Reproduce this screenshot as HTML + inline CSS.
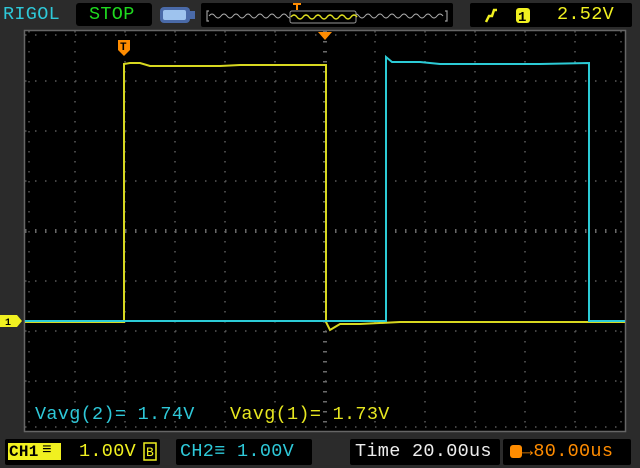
<!DOCTYPE html>
<html><head><meta charset="utf-8"><style>
*{margin:0;padding:0}
body{width:640px;height:468px;background:#2b2b2b;overflow:hidden;position:relative;font-family:"Liberation Mono",monospace}
.t{position:absolute;font-size:18.5px;line-height:20px;white-space:pre;letter-spacing:0.3px}
.box{position:absolute;background:#000;border-radius:3px}
</style></head><body>
<div class="t" style="left:3px;top:5px;color:#2ec8d8">RIGOL</div>
<div class="box" style="left:76px;top:3px;width:76px;height:23px"></div>
<div class="t" style="left:89px;top:5px;color:#1fd91f">STOP</div>
<svg style="position:absolute;left:0;top:0" width="640" height="468">
<rect x="160" y="7" width="30" height="16" rx="4" fill="#4a6aa8"/>
<rect x="163" y="10" width="23" height="10" rx="2" fill="#9ec3ee"/>
<rect x="190" y="11" width="5" height="8" fill="#4a6aa8"/>
<rect x="201" y="3" width="252" height="24" rx="2" fill="#000"/>
<path d="M209 11 h-2 v10 h2 M445 11 h2 v10 h-2" stroke="#999" fill="none" stroke-width="1.2"/>
<path d="M209 16 q3 -4 6 0 t6 0 t6 0 t6 0 t6 0 t6 0 t6 0 t6 0 t6 0 t6 0 t6 0 t6 0 t6 0 t6 0 t6 0 t6 0 t6 0 t6 0 t6 0 t6 0 t6 0 t6 0 t6 0 t6 0 t6 0 t6 0 t6 0 t6 0 t6 0 t6 0 t6 0 t6 0 t6 0 t6 0 t6 0 t6 0 t6 0 t6 0 t6 0" stroke="#aaa" fill="none" stroke-width="1"/>
<rect x="290" y="11" width="66" height="12" rx="2" fill="#000" stroke="#999"/>
<path d="M291 17 q3 -4 6 0 t6 0 t6 0 t6 0 t6 0 t6 0 t6 0 t6 0 t6 0 t6 0 t6 0" stroke="#e0e020" fill="none" stroke-width="1.4"/>
<path d="M293 4 h8 M297 4 v6" stroke="#ff8c00" stroke-width="2"/>
<rect x="470" y="3" width="162" height="24" rx="2" fill="#000"/>
<rect x="516" y="8" width="14" height="15" rx="3" fill="#f0f020"/>
<text x="518" y="21" font-family="Liberation Mono" font-size="14" font-weight="bold" fill="#000">1</text>
<path d="M486 22 l3 -6 h3 l2 -6 h3" stroke="#f0f020" stroke-width="2.5" fill="none"/>
<rect x="24.5" y="30.5" width="601" height="401" fill="#000" stroke="#666" stroke-width="1.5"/>
<g stroke="#5a5a5a" stroke-width="1.5" stroke-dasharray="1.5 8.5">
<path d="M75 31V431M125 31V431M175 31V431M225 31V431M275 31V431M375 31V431M425 31V431M475 31V431M525 31V431M575 31V431"/>
<path d="M25 81H625M25 131H625M25 181H625M25 281H625M25 331H625M25 381H625"/>
</g>
<g stroke="#6a6a6a" stroke-dasharray="1.5 8.5">
<path d="M325 31V431" stroke-width="4"/>
<path d="M25 231H625" stroke-width="4"/>
<path d="M25 35H625M25 427H625M29 31V431M621 31V431" stroke-width="1.2"/>
</g>
<path d="M25 322H124V64L130 63H140L150 66H220L240 65H326V322L330 330L340 324H360L400 322H625" stroke="#d8d820" stroke-width="2" fill="none"/>
<path d="M25 321H386V57L392 62H420L440 64H540L589 63V321H625" stroke="#2ccbd6" stroke-width="2" fill="none"/>
<path d="M118 40h12v10l-6 6l-6-6z" fill="#ff8c00"/>
<text x="120" y="50" font-family="Liberation Mono" font-size="11" font-weight="bold" fill="#000">T</text>
<path d="M318 32h14l-7 8z" fill="#ff8c00"/>
<path d="M0 315h17l5 6l-5 6h-17z" fill="#f0f020"/>
<text x="5" y="325" font-family="Liberation Mono" font-size="10" font-weight="bold" fill="#000">1</text>
<rect x="5" y="439" width="155" height="26" rx="2" fill="#000"/>
<rect x="176" y="439" width="136" height="26" rx="2" fill="#000"/>
<rect x="350" y="439" width="150" height="26" rx="2" fill="#000"/>
<rect x="503" y="439" width="128" height="26" rx="2" fill="#000"/>
<rect x="8" y="443" width="53" height="17" fill="#f0f020"/>
<rect x="144" y="443" width="12" height="17" fill="#000" stroke="#f0f020" stroke-width="1.5"/>
<rect x="510" y="445" width="12" height="13" rx="3" fill="#ff8c00"/>
</svg>
<div class="t" style="left:9px;top:442px;color:#000;font-weight:bold;font-size:16px">CH1</div>
<div class="t" style="left:42px;top:440px;color:#000;font-weight:bold;font-size:16px">&#8801;</div>
<div class="t" style="left:79px;top:442px;color:#f0f020">1.00V</div>
<div class="t" style="left:146px;top:443px;color:#f0f020;font-size:13px">B</div>
<div class="t" style="left:180px;top:442px;color:#2ec8d8">CH2&#8801; 1.00V</div>
<div class="t" style="left:355px;top:442px;color:#eee">Time 20.00us</div>
<div class="t" style="left:522px;top:442px;color:#ff8c00">&#8594;80.00us</div>
<div class="t" style="left:35px;top:405px;color:#2ec8d8">Vavg(2)= 1.74V</div>
<div class="t" style="left:230px;top:405px;color:#e6e620">Vavg(1)= 1.73V</div>
<div class="t" style="left:557px;top:5px;color:#f0f020">2.52V</div>
</body></html>
